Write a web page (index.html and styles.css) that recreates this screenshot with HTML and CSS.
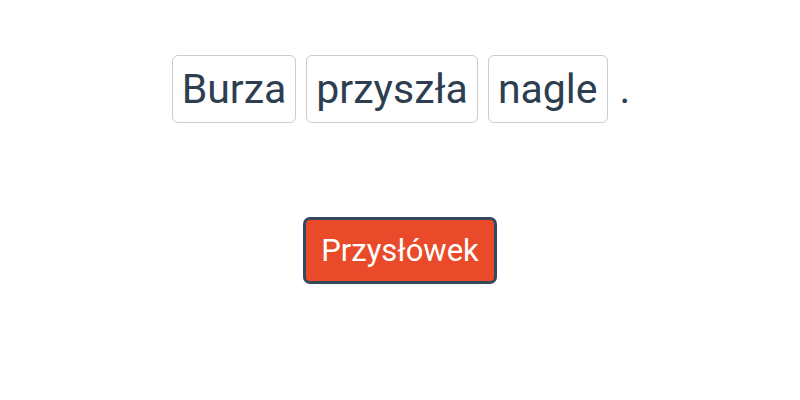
FILE: index.html
```html
<!DOCTYPE html>
<html lang="pl">
<head>
    <meta charset="UTF-8">
    <meta name="viewport" content="width=device-width, initial-scale=1.0">
    <title>Przysłowie</title>
    <link rel="stylesheet" href="styles.css">
</head>
<body>
    <div class="container">
        <div class="sentence">
            <span class="word">Burza</span>
            <span class="word">przyszła</span>
            <span class="word">nagle</span>
            <span class="dot">.</span>
        </div>
        <div class="controls">
            <button class="proverb">Przysłówek</button>
        </div>
    </div>
</body>
</html>
```

FILE: styles.css
```css
body {
    font-family: Roboto, "Liberation Sans", sans-serif;
    background: #fff;
    color: #2c3e50;
    margin: 0;
    padding: 0;
}

.container {
    display: flex;
    flex-direction: column;
    align-items: center;
    padding-top: 55px;
}

.sentence {
    display: flex;
    align-items: center;
    gap: 10px;
    font-size: 41px;
    margin-left: 2px;
}

.word {
    border: 1px solid #cccccc;
    border-radius: 6px;
    padding: 0 9px;
    height: 66px;
    line-height: 66px;
}

.dot {
    padding-left: 2px;
}

.controls {
    margin-top: 94px;
}

.proverb {
    font-family: Roboto, "Liberation Sans", sans-serif;
    font-size: 31px;
    color: #fff;
    background: #e84a2a;
    border: 3px solid #34495e;
    border-radius: 7px;
    height: 67px;
    padding: 0 15px;
    cursor: pointer;
}
```
